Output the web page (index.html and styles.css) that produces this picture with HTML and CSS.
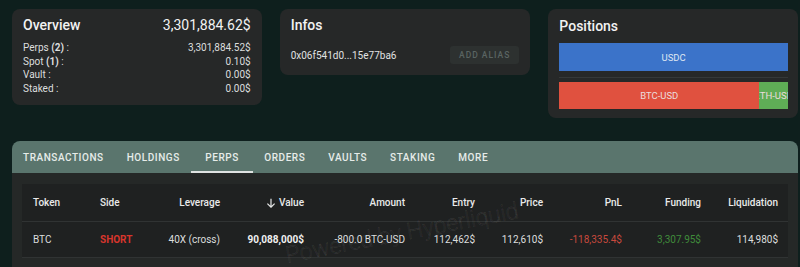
FILE: index.html
```html
<!DOCTYPE html>
<html>
<head>
<meta charset="utf-8">
<link rel="stylesheet" href="styles.css">
</head>
<body>
<div class="page">
  <div class="cards">
    <div class="card overview">
      <div class="card-head">
        <span class="card-title">Overview</span>
        <span class="card-total">3,301,884.62$</span>
      </div>
      <div class="kv-list">
        <div class="kv"><span>Perps <b>(2)</b> :</span><span>3,301,884.52$</span></div>
        <div class="kv"><span>Spot <b>(1)</b> :</span><span>0.10$</span></div>
        <div class="kv"><span>Vault :</span><span>0.00$</span></div>
        <div class="kv"><span>Staked :</span><span>0.00$</span></div>
      </div>
    </div>
    <div class="card infos">
      <div class="card-head"><span class="card-title">Infos</span></div>
      <div class="addr-row">
        <span class="addr">0x06f541d0...15e77ba6</span>
        <button class="alias-btn">ADD ALIAS</button>
      </div>
    </div>
    <div class="card positions">
      <div class="card-head"><span class="card-title">Positions</span></div>
      <div class="bar">
        <div class="seg seg-blue" style="width:100%">USDC</div>
      </div>
      <div class="divider"></div>
      <div class="bar">
        <div class="seg seg-red" style="width:87.4%">BTC-USD</div>
        <div class="seg seg-green" style="width:12.6%">ETH-USD</div>
      </div>
    </div>
  </div>

  <div class="tabs">
    <div class="tab">TRANSACTIONS</div>
    <div class="tab">HOLDINGS</div>
    <div class="tab active">PERPS</div>
    <div class="tab">ORDERS</div>
    <div class="tab">VAULTS</div>
    <div class="tab">STAKING</div>
    <div class="tab">MORE</div>
  </div>

  <div class="panel">
    <div class="table">
      <div class="th left first">Token</div>
      <div class="th left">Side</div>
      <div class="th">Leverage</div>
      <div class="th"><svg class="sort-icon" width="10" height="10" viewBox="0 0 10 10"><path d="M5 0.8V9.2M1.4 5.6L5 9.2L8.6 5.6" fill="none" stroke="#e6e8e8" stroke-width="1.2"/></svg>Value</div>
      <div class="th">Amount</div>
      <div class="th">Entry</div>
      <div class="th">Price</div>
      <div class="th">PnL</div>
      <div class="th">Funding</div>
      <div class="th">Liquidation</div>

      <div class="td left first">BTC</div>
      <div class="td left short">SHORT</div>
      <div class="td">40X (cross)</div>
      <div class="td strong">90,088,000$</div>
      <div class="td">-800.0 BTC-USD</div>
      <div class="td">112,462$</div>
      <div class="td">112,610$</div>
      <div class="td neg">-118,335.4$</div>
      <div class="td pos">3,307.95$</div>
      <div class="td">114,980$</div>
    </div>
    <div class="watermark">Powered by Hyperliquid</div>
  </div>
</div>
</body>
</html>
```

FILE: styles.css
```css
* { box-sizing: border-box; }
html, body {
  margin: 0;
  background: #0e1f1d;
  font-family: Roboto, "Liberation Sans", Arial, sans-serif;
  color: #e6e8e8;
  overflow: hidden;
}
.page {
  padding: 9px 2px 0 12px;
}
.cards {
  display: flex;
  gap: 18px;
  align-items: flex-start;
}
.card {
  background: #262828;
  border-radius: 8px;
  width: 250px;
  padding: 6px 11px 10px 11px;
}
.card.infos { width: 251px; padding-bottom: 11px; }
.card.positions { padding: 7px 10px 9px 11px; }
.card-head {
  display: flex;
  justify-content: space-between;
  align-items: center;
  height: 20px;
  line-height: 20px;
}
.card-title {
  font-size: 14px;
  font-weight: 500;
  color: #f2f2f2;
}
.card-total {
  font-size: 14px;
  color: #f2f2f2;
}
.kv-list { margin-top: 6px; }
.kv {
  display: flex;
  justify-content: space-between;
  font-size: 10px;
  line-height: 13.5px;
  color: #dcdede;
}
.kv b { font-weight: 700; }
.addr-row {
  margin-top: 11px;
  display: flex;
  justify-content: space-between;
  align-items: center;
}
.addr {
  font-size: 10px;
  color: #e0e2e2;
}
.alias-btn {
  height: 18px;
  padding: 0 9px;
  border: none;
  border-radius: 3px;
  background: #2d3130;
  color: #5a6462;
  font-family: inherit;
  font-size: 8.5px;
  font-weight: 500;
  letter-spacing: 1px;
}
.bar {
  display: flex;
  height: 28px;
  margin-top: 7px;
}
.bar + .divider + .bar { height: 27px; margin-top: 4px; }
.divider {
  height: 1px;
  background: #353838;
  margin-top: 6px;
}
.seg {
  display: flex;
  align-items: center;
  justify-content: center;
  overflow: hidden;
  white-space: nowrap;
  font-size: 9.5px;
  color: #ecdcdc;
}
.seg-blue { background: #3b73c9; color: #dfe6f2; }
.seg-red { background: #e0513f; }
.seg-green { background: #5fad56; }

.tabs {
  margin-top: 23px;
  height: 32px;
  background: #5a756d;
  border-radius: 8px 8px 0 0;
  display: flex;
}
.tab {
  height: 32px;
  line-height: 33px;
  padding: 0 11.5px;
  font-size: 10px;
  font-weight: 500;
  letter-spacing: 0.55px;
  color: #e6ece9;
}
.tab:first-child { padding-left: 11px; }
.tab.active {
  padding: 0 14px;
  box-shadow: inset 0 -2px 0 #dfe3e2;
}
.panel {
  position: relative;
  background: #252827;
  padding: 11px 10px 0 10px;
  height: 94px;
  overflow: hidden;
}
.table {
  background: #1f2121;
  display: grid;
  grid-template-columns: 68px 60px 80px 84px 101px 70px 68px 79px 79px 77px;
}
.th, .td {
  display: flex;
  align-items: center;
  justify-content: flex-end;
  padding: 0 10px;
  font-size: 10px;
  white-space: nowrap;
  border-bottom: 1px solid #303333;
}
.th {
  height: 38px;
  font-weight: 500;
  color: #e9eaea;
}
.td {
  height: 36px;
  color: #dcdede;
}
.left { justify-content: flex-start; }
.first { padding-left: 11px; }
.sort-icon { margin-right: 3px; }
.short { color: #d7352c; font-weight: 700; }
.strong { font-weight: 700; color: #f0f0f0; }
.neg { color: #c8493d; }
.pos { color: #3f8b3b; }
.watermark {
  position: absolute;
  left: 390px;
  top: 60px;
  transform: translate(-50%, -50%) rotate(-11deg);
  font-size: 23px;
  font-weight: 300;
  white-space: nowrap;
  color: rgba(255, 255, 255, 0.015);
  -webkit-text-stroke: 0.5px rgba(255, 255, 255, 0.1);
  pointer-events: none;
}
```
